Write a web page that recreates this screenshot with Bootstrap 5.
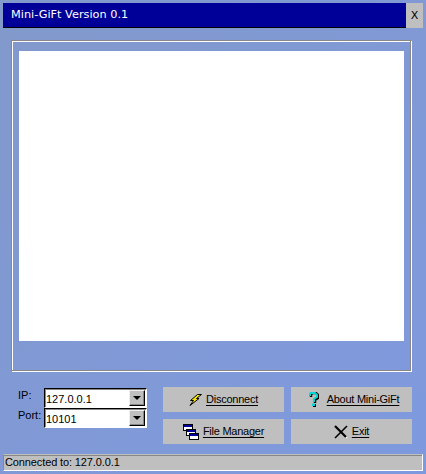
<!DOCTYPE html>
<html><head><meta charset="utf-8"><title>Mini-GiFt</title>
<link rel="stylesheet" href="https://cdn.jsdelivr.net/npm/bootstrap@5.3.0/dist/css/bootstrap.min.css">
<style>
html,body{margin:0;width:426px;height:474px;overflow:hidden}
body{background:linear-gradient(135deg,#8299cb,#7f99df);font:11px/13px "Liberation Sans",sans-serif;color:#000;padding:3px}
.app-win{width:420px;height:468px;position:relative}
.app-title{height:25px}
.title-fill{flex:1;background:#000099;border-bottom:1px solid #000;color:#fff;font:11.3px/23px "DejaVu Sans",sans-serif;padding-left:8px}
.title-x{width:17px;background:#bfbfbf;font:11px/25px "DejaVu Sans",sans-serif;text-align:center}
.app-frame{margin:12px 0 0 8px;width:400px;height:331px;border:1px solid #888;box-shadow:inset 1px 1px 0 #fff,1px 1px 0 #fff;padding:10px 7px 0 7px}
.app-canvas{background:#fff;height:290px;width:385px}
.app-controls{margin:16px 0 0 15px;height:59px}
.field-labels{width:26px;padding-top:2px}
.field-labels div{height:20px}
.combo-col{width:103px;margin-top:1px}
.fake-combo{height:20px;background:#fff;border:1px solid;border-color:#000 #fff #fff #000;box-shadow:inset 1px 1px 0 #888;font:11px/20px "Liberation Sans",sans-serif;padding-left:1px}
.combo-arrow{margin:1px 1px 1px auto;width:16px;height:16px;background:#bfbfbf;border:1px solid;border-color:#eee #000 #000 #eee;display:flex;align-items:center;justify-content:center;box-shadow:inset -1px -1px 0 #888}
.combo-arrow i{display:block;width:0;height:0;border:4px solid transparent;border-top-color:#000;border-bottom:0}
.btn-col{width:121px;margin-left:16px;gap:7px}
.btn-col+.btn-col{margin-left:7px}
.flat-btn{height:25px;background:#bfbfbf;font:11px/25px "Liberation Sans",sans-serif;color:#000;text-decoration:underline;gap:4px;text-underline-offset:2px;letter-spacing:-.25px}
.flat-btn svg{flex:none}
.about-btn{gap:8px;padding-left:5px}
.status-bar{position:absolute;left:0;right:0;top:451px;height:17px;background:#bfbfbf;border:1px solid;border-color:#bfbfbf #fff #fff #888;box-shadow:inset 0 1px 0 #888;font:11px/15px "Liberation Sans",sans-serif;padding-left:1px;letter-spacing:-.12px}
</style></head><body>
<div class="app-win">
  <div class="app-title d-flex">
    <div class="title-fill">Mini-GiFt Version 0.1</div>
    <div class="title-x">X</div>
  </div>
  <div class="app-frame"><div class="app-canvas"></div></div>
  <div class="app-controls d-flex">
    <div class="field-labels"><div>IP:</div><div>Port:</div></div>
    <div class="combo-col">
      <div class="fake-combo d-flex"><span>127.0.0.1</span><span class="combo-arrow"><i></i></span></div>
      <div class="fake-combo d-flex"><span>10101</span><span class="combo-arrow"><i></i></span></div>
    </div>
    <div class="btn-col d-flex flex-column">
      <div class="flat-btn d-flex align-items-center justify-content-center">
        <svg width="13" height="12" viewBox="0 0 13 12"><path d="M8.500 .5h4L7.500 4.500h2.500L1 11.500l3.500-5H1.500z" fill="#f5e611" stroke="#000"/></svg>
        <span>Disconnect</span></div>
      <div class="flat-btn d-flex align-items-center justify-content-center">
        <svg width="16" height="16" viewBox="0 0 16 16"><g stroke="#000" fill="#fff"><rect x=".5" y=".5" width="9" height="6"/><rect x="3.500" y="5.500" width="9" height="6"/><rect x="6.500" y="9.500" width="9" height="6"/></g><path d="M1 1h8v2H1zM4 6h8v2H4zM7 10h8v2H7z" fill="#000099"/></svg>
        <span>File Manager</span></div>
    </div>
    <div class="btn-col d-flex flex-column">
      <div class="flat-btn about-btn d-flex align-items-center justify-content-center">
        <svg width="10" height="16" viewBox="0 0 10 16"><path d="M2 5V3l1-2h4l2 2v3L6 8v3" fill="none" stroke="#000" stroke-width="2.400"/><path d="M1 4V2l1-1h4l2 2v2L5 7v3" fill="none" stroke="#00d8d8" stroke-width="2"/><rect x="4" y="12" width="3" height="3" fill="#000"/><rect x="3" y="11.500" width="3" height="2.500" fill="#00d8d8"/></svg>
        <span>About Mini-GiFt</span></div>
      <div class="flat-btn d-flex align-items-center justify-content-center">
        <svg width="14" height="14" viewBox="0 0 14 14"><path d="M2 2l11 11" stroke="#fff" stroke-width="1.500"/><path d="M1 1l11 11" stroke="#000" stroke-width="2.200"/><path d="M13 1L1 13" stroke="#000" stroke-width="1.600"/></svg>
        <span>Exit</span></div>
    </div>
  </div>
  <div class="status-bar">Connected to: 127.0.0.1</div>
</div>
</body></html>
